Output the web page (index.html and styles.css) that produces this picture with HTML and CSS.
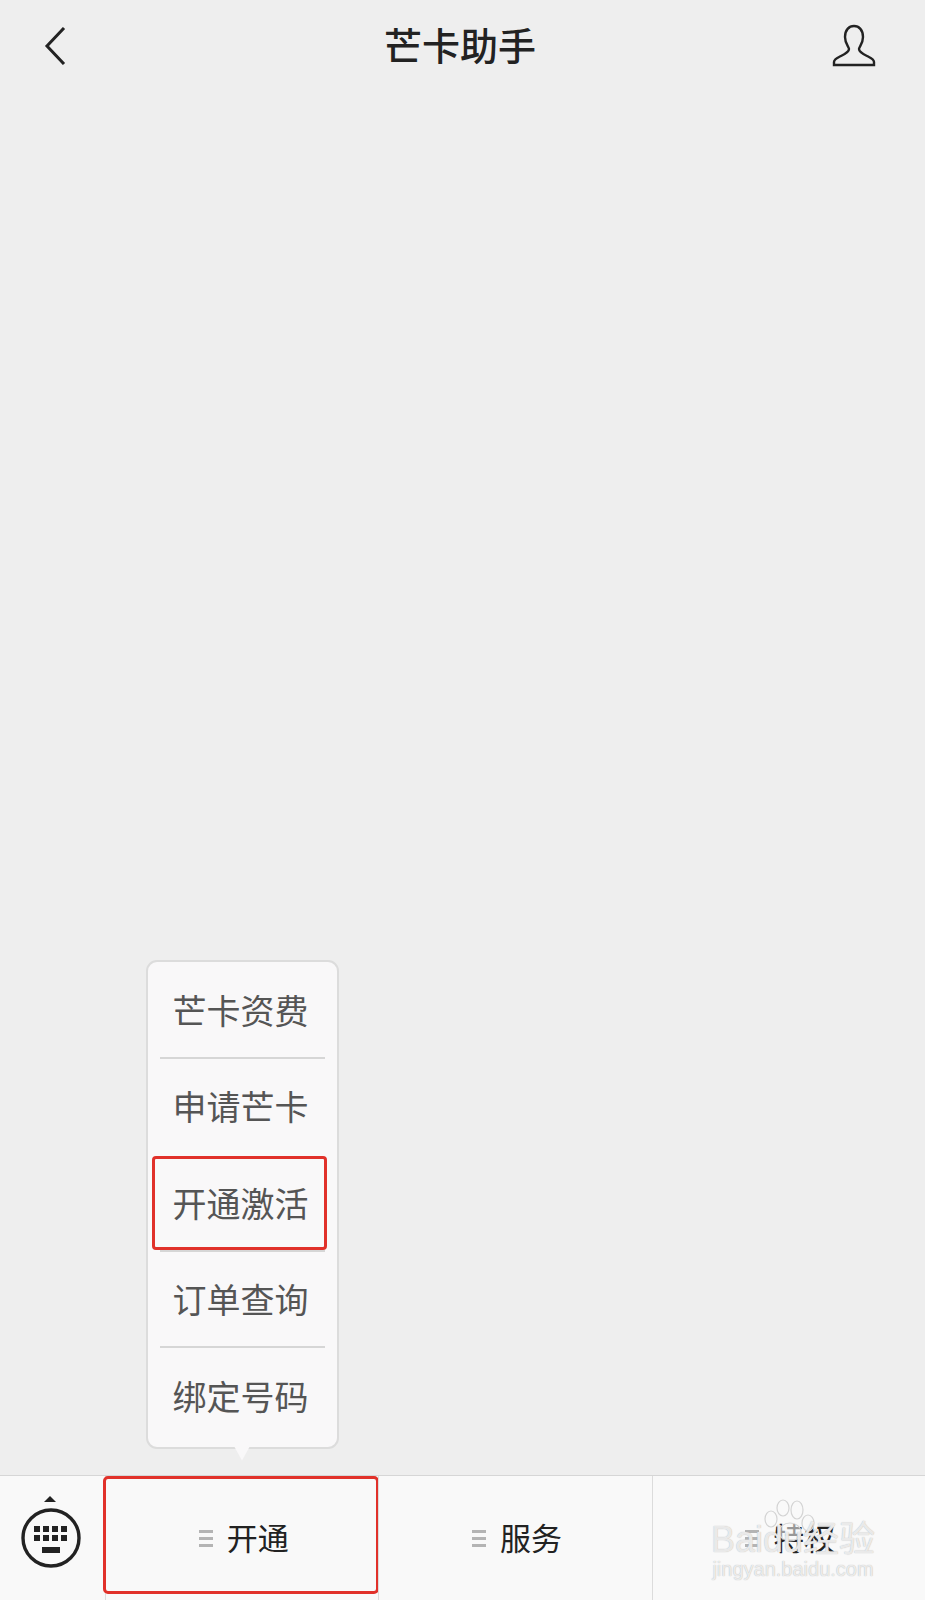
FILE: index.html
```html
<!DOCTYPE html>
<html lang="zh-CN">
<head>
    <meta charset="UTF-8">
    <meta name="viewport" content="width=device-width, initial-scale=1.0">
    <title>芒卡助手</title>
    <link rel="stylesheet" href="styles.css">
</head>
<body>

    <div class="app">
        <header class="topbar">
            <svg class="back-icon" width="22" height="38" viewBox="0 0 22 38">
                <path d="M20 1 L3 19 L20 37" fill="none" stroke="#222" stroke-width="3"/>
            </svg>
            <h1 class="title">芒卡助手</h1>
            <svg class="user-icon" width="44" height="44" viewBox="0 0 44 44">
                <path d="M2 41 v-3 c0-3 3-4 7-6 c4-2 8-4 8-7 c0-2-4-5-4-12 c0-7 4-11 9-11 s9 4 9 11 c0 7-4 10-4 12 c0 3 4 5 8 7 c4 2 7 3 7 6 v3 z" fill="none" stroke="#222" stroke-width="2.4"/>
            </svg>
        </header>

        <main class="content"></main>

        <div class="popup">
            <div class="popup-item">芒卡资费</div>
            <div class="popup-item covered">申请芒卡</div>
            <div class="popup-item">开通激活</div>
            <div class="popup-item">订单查询</div>
            <div class="popup-item last">绑定号码</div>
            <div class="popup-mark"></div>
        </div>

        <footer class="bottombar">
            <div class="keyboard">
                <svg width="60" height="72" viewBox="0 0 60 72">
                    <path d="M23 6 L29 0 L35 6 Z" fill="#222"/>
                    <circle cx="30" cy="42" r="28" fill="none" stroke="#222" stroke-width="3.4"/>
                    <g fill="#222">
                        <rect x="13" y="30" width="6" height="6"/>
                        <rect x="22" y="30" width="6" height="6"/>
                        <rect x="31" y="30" width="6" height="6"/>
                        <rect x="40" y="30" width="6" height="6"/>
                        <rect x="13" y="39" width="6" height="6"/>
                        <rect x="22" y="39" width="6" height="6"/>
                        <rect x="31" y="39" width="6" height="6"/>
                        <rect x="40" y="39" width="6" height="6"/>
                        <rect x="21" y="51" width="18" height="6"/>
                    </g>
                </svg>
            </div>
            <div class="tab">
                <span class="tab-icon"></span>
                <span class="tab-label">开通</span>
                <div class="tab-mark"></div>
            </div>
            <div class="tab">
                <span class="tab-icon"></span>
                <span class="tab-label">服务</span>
            </div>
            <div class="tab">
                <span class="tab-icon"></span>
                <span class="tab-label">特权</span>
            </div>
        </footer>

        <div class="watermark">
            <svg class="paw" width="52" height="44" viewBox="0 0 52 44">
                <g fill="#fafafa" fill-opacity="0.55" stroke="#d4d4d4" stroke-width="1.2">
                    <ellipse cx="7" cy="20" rx="6" ry="8"/>
                    <ellipse cx="19" cy="9" rx="6" ry="8"/>
                    <ellipse cx="33" cy="11" rx="6" ry="9"/>
                    <ellipse cx="44" cy="24" rx="6" ry="8"/>
                    <ellipse cx="26" cy="33" rx="11" ry="9"/>
                </g>
            </svg>
            <div class="wm-logo">Baidu经验</div>
            <div class="wm-url">jingyan.baidu.com</div>
        </div>
    </div>

</body>
</html>
```

FILE: styles.css
```css
* {
    box-sizing: border-box;
}
body {
    margin: 0;
    font-family: "Noto Sans CJK SC", "Liberation Sans", sans-serif;
    background-color: #eeeeee;
}
.app {
    position: relative;
    width: 925px;
    height: 1600px;
    overflow: hidden;
    display: flex;
    flex-direction: column;
}
.topbar {
    height: 92px;
    padding: 0 49px 0 44px;
    display: flex;
    align-items: center;
    justify-content: space-between;
}
.title {
    margin: 0 0 6px 22px;
    font-size: 38px;
    font-weight: 500;
    color: #222;
}
.content {
    flex: 1;
}

/* menu popup above the first tab */
.popup {
    position: absolute;
    left: 146px;
    top: 960px;
    width: 193px;
    height: 489px;
    display: flex;
    flex-direction: column;
    background: #f9f8f9;
    border: 2px solid #dcdcdc;
    border-radius: 11px;
}
.popup::after {
    content: "";
    position: absolute;
    left: 86px;
    bottom: -15px;
    width: 16px;
    height: 16px;
    background: #f9f8f9;
    clip-path: polygon(0 0, 100% 0, 50% 90%);
}
.popup-item {
    flex: 0 0 96.5px;
    margin: 0 12px;
    padding: 0 4px 0 0;
    display: flex;
    align-items: center;
    justify-content: center;
    font-size: 34px;
    color: #555;
    border-bottom: 2px solid #d6d6d6;
}
.popup-item.covered {
    border-bottom-color: transparent;
}
.popup-item.last {
    flex: 1;
    padding-bottom: 4px;
    border-bottom: none;
}
.popup-mark {
    position: absolute;
    left: 4px;
    top: 194px;
    width: 175px;
    height: 94px;
    border: 3.5px solid #e1312a;
    border-radius: 4px;
}

.bottombar {
    height: 125px;
    display: flex;
    background: #f9f9f9;
    border-top: 1px solid #d6d6d6;
}
.keyboard {
    width: 105px;
    padding: 0 4px 12px 0;
    display: flex;
    align-items: center;
    justify-content: center;
}
.tab {
    position: relative;
    flex: 1;
    padding-left: 3px;
    display: flex;
    align-items: center;
    justify-content: center;
    gap: 14px;
    font-size: 31px;
    color: #222;
    border-left: 1px solid #dcdcdc;
}
.tab-label {
    margin-bottom: 4px;
}
.tab-icon {
    width: 14px;
    height: 17px;
    background: repeating-linear-gradient(#b4b4b4 0 3px, transparent 3px 7px);
}
.tab-mark {
    position: absolute;
    left: -3px;
    top: 0;
    right: -1px;
    bottom: 6px;
    border: 3.5px solid #e1312a;
    border-radius: 5px;
}

.watermark {
    position: absolute;
    left: 708px;
    top: 1500px;
    width: 170px;
    text-align: center;
    font-family: "Liberation Sans", "Noto Sans CJK SC", sans-serif;
    color: rgba(251, 251, 251, 0.8);
    text-shadow: 0 0 1px #a8a8a8;
}
.paw {
    position: absolute;
    left: 56px;
    top: -1px;
}
.wm-logo {
    position: relative;
    margin-top: 22px;
    font-size: 36px;
    line-height: 36px;
    white-space: nowrap;
}
.wm-url {
    position: relative;
    font-size: 20px;
    line-height: 22px;
    white-space: nowrap;
}
```
